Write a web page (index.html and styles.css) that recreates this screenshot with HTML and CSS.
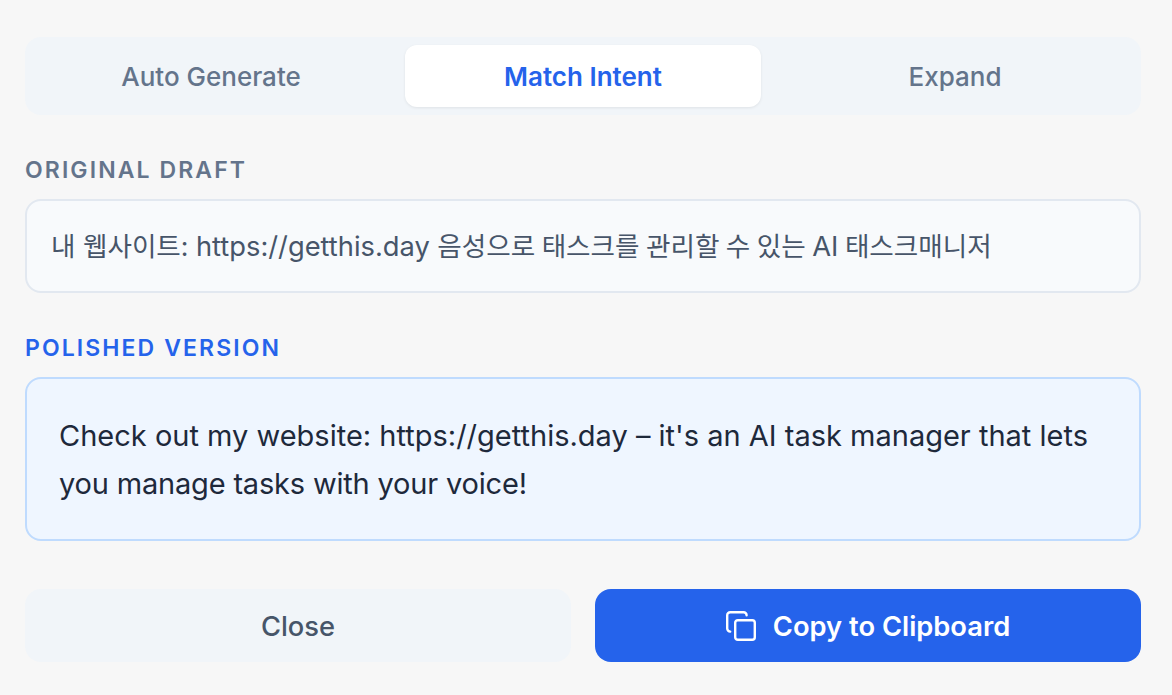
FILE: index.html
```html
<!DOCTYPE html>
<html lang="en">
<head>
<meta charset="utf-8">
<title>Polish</title>
<link rel="stylesheet" href="styles.css">
</head>
<body>
<main class="panel">
  <div class="tabs">
    <div class="tab">Auto Generate</div>
    <div class="tab active">Match Intent</div>
    <div class="tab">Expand</div>
  </div>
  <div class="label label-draft">ORIGINAL DRAFT</div>
  <div class="draft"><p class="draft-text">내 웹사이트: <span class="latin">https://getthis.day</span> <span class="tail">음성으로 태스크를 관리할 수 있는 <span class="latin">AI</span> 태스크매니저</span></p></div>
  <div class="label label-polished">POLISHED VERSION</div>
  <div class="polished">Check out my website: https://getthis.day – it's an AI task manager that lets <span class="tight">you manage tasks with your voice!</span></div>
  <div class="actions">
    <div class="btn btn-close"><span class="btn-label">Close</span></div>
    <div class="btn btn-copy">
      <svg class="copy-icon" viewBox="0 0 30 30" fill="none" stroke="#fff" stroke-width="2.4" stroke-linecap="round" stroke-linejoin="round">
        <rect x="9.2" y="9.2" width="19.6" height="19.6" rx="2.6"/>
        <path d="M4.2 20.6 A3 3 0 0 1 1.2 17.6 V4.2 A3 3 0 0 1 4.2 1.2 H17.6 A3 3 0 0 1 20.6 4.2"/>
      </svg>
      <span class="btn-label">Copy to Clipboard</span>
    </div>
  </div>
</main>
</body>
</html>
```
FILE: styles.css
```css
* { box-sizing: border-box; }
html, body { margin: 0; height: 100%; }
body {
  background: #f7f7f7;
  font-family: Inter, "Noto Sans CJK KR", sans-serif;
  overflow: hidden;
}
.panel { padding: 37px 31px 0 25px; }
.tabs {
  display: flex;
  gap: 16px;
  height: 78px;
  padding: 8px;
  background: #f1f5f9;
  border-radius: 16px;
}
.tab {
  flex: 1;
  display: flex;
  align-items: center;
  justify-content: center;
  font-size: 26px;
  font-weight: 500;
  color: #64748b;
  border-radius: 12px;
}
.tab.active {
  background: #fff;
  color: #2563eb;
  font-weight: 600;
  box-shadow: 0 1px 3px rgba(0, 0, 0, 0.08);
}
.label {
  font-size: 23px;
  font-weight: 600;
  letter-spacing: 2.1px;
  line-height: 28px;
}
.label-draft { margin-top: 41px; color: #64748b; }
.label-polished { margin-top: 41px; color: #2563eb; }
.draft {
  margin-top: 15px;
  height: 94px;
  display: flex;
  align-items: center;
  padding: 0 24px 3px;
  background: #f8fafc;
  border: 2px solid #e2e8f0;
  border-radius: 16px;
  font-size: 26.6px;
  color: #475569;
}
.draft-text { margin: 0; }
.latin { font-size: 27.3px; }
.tail { word-spacing: -1px; }
.polished {
  margin-top: 15px;
  height: 164px;
  padding: 33px 32px;
  background: #eff6ff;
  border: 2px solid #bfdbfe;
  border-radius: 16px;
  font-size: 29px;
  line-height: 48px;
  color: #1e293b;
}
.tight { letter-spacing: -0.18px; }
.actions { display: flex; gap: 24px; margin-top: 48px; }
.btn {
  flex: 1;
  height: 73px;
  display: flex;
  align-items: center;
  justify-content: center;
  gap: 17px;
  border-radius: 16px;
  font-size: 27.3px;
  font-weight: 600;
}
.btn-label { padding-top: 2px; }
.btn-close { background: #f1f5f9; color: #475569; font-weight: 500; }
.btn-copy { background: #2563eb; color: #fff; }
.copy-icon { width: 30px; height: 30px; }
```
